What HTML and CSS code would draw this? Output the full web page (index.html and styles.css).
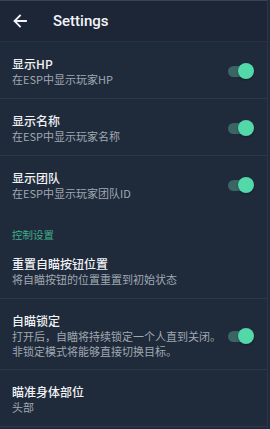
FILE: index.html
```html
<!DOCTYPE html>
<html lang="zh">
<head>
<meta charset="utf-8">
<title>Settings</title>
<link rel="stylesheet" href="styles.css">
</head>
<body>
<div class="page">
  <header class="appbar">
    <svg class="back" width="14" height="14" viewBox="0 0 14 14" aria-hidden="true">
      <path d="M13 7H1.8M7 1.5L1.5 7L7 12.5" fill="none" stroke="#f2f4f7" stroke-width="1.8" stroke-linecap="square"/>
    </svg>
    <h1 class="title">Settings</h1>
  </header>
  <main class="list">
    <div class="row">
      <div class="text">
        <div class="t">显示HP</div>
        <div class="s">在ESP中显示玩家HP</div>
      </div>
      <span class="switch"><span class="thumb"></span></span>
    </div>
    <div class="row">
      <div class="text">
        <div class="t">显示名称</div>
        <div class="s">在ESP中显示玩家名称</div>
      </div>
      <span class="switch"><span class="thumb"></span></span>
    </div>
    <div class="row last">
      <div class="text">
        <div class="t">显示团队</div>
        <div class="s">在ESP中显示玩家团队ID</div>
      </div>
      <span class="switch"><span class="thumb"></span></span>
    </div>
    <div class="section">控制设置</div>
    <div class="row">
      <div class="text">
        <div class="t">重置自瞄按钮位置</div>
        <div class="s">将自瞄按钮的位置重置到初始状态</div>
      </div>
    </div>
    <div class="row multi">
      <div class="text">
        <div class="t">自瞄锁定</div>
        <div class="s"><span class="ln">打开后，自瞄将持续锁定一个人直到关闭。</span><span class="ln">非锁定模式将能够直接切换目标。</span></div>
      </div>
      <span class="switch"><span class="thumb"></span></span>
    </div>
    <div class="row">
      <div class="text">
        <div class="t">瞄准身体部位</div>
        <div class="s">头部</div>
      </div>
    </div>
  </main>
</div>
</body>
</html>
```
FILE: styles.css
```css
html, body {
  margin: 0;
  padding: 0;
  background: #1f2a3a;
}
body {
  font-family: "Noto Sans CJK SC", sans-serif;
  color: #eceef1;
  width: 270px;
  height: 429px;
  overflow: hidden;
}
.page {
  width: 267px;
  min-height: 429px;
  border-right: 1px solid #2a3545;
  background: #1f2a3a;
}
.appbar {
  display: flex;
  align-items: center;
  height: 40px;
  border-top: 1px solid #3a4350;
  border-bottom: 1px solid #263142;
  background: #1c2636;
  padding-left: 13px;
}
.back {
  display: block;
}
.title {
  margin: 0 0 0 26px;
  font-family: Roboto, sans-serif;
  font-weight: 500;
  font-size: 15px;
  color: #f2f4f7;
}
.list {
  display: flex;
  flex-direction: column;
}
.row {
  display: flex;
  align-items: center;
  justify-content: space-between;
  padding: 14px 13px 12px 12px;
  border-bottom: 1px solid #2c3748;
}
.row.multi {
  padding-bottom: 10px;
}
.row.last {
  border-bottom: none;
}
.text {
  display: flex;
  flex-direction: column;
}
.t {
  font-family: "Noto Sans CJK SC", sans-serif;
  font-size: 12px;
  line-height: 16px;
  font-weight: 500;
  color: #f0f2f5;
}
.s {
  font-family: "Noto Sans CJK SC", sans-serif;
  font-size: 11px;
  line-height: 14px;
  color: #a0a8b2;
}
.ln {
  display: block;
  line-height: 15px;
}
.section {
  padding: 16px 12px 0;
  font-family: "Noto Sans CJK SC", sans-serif;
  font-size: 10.5px;
  line-height: 14px;
  color: #3fae8c;
}
.switch {
  position: relative;
  display: block;
  flex: none;
  width: 25px;
  height: 11px;
  border-radius: 6px;
  background: #3b6464;
  margin-right: 1px;
}
.thumb {
  position: absolute;
  right: -1px;
  top: 50%;
  width: 16px;
  height: 16px;
  margin-top: -8px;
  border-radius: 50%;
  background: #52d8a9;
  box-shadow: 0 1px 2px rgba(0, 0, 0, 0.35);
}
```
